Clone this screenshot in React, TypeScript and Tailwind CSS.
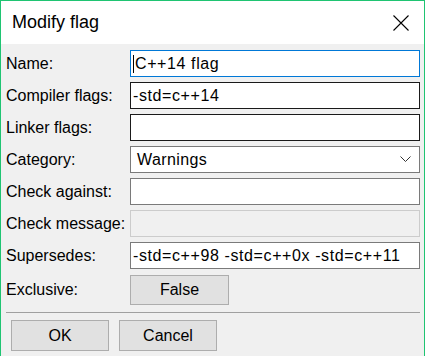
import React from "react";

const font = { fontFamily: '"Liberation Sans", Arial, sans-serif' };

function Field({
  label,
  children,
}: {
  label: string;
  children: React.ReactNode;
}) {
  return (
    <>
      <div className="flex items-center text-[16px] text-black">{label}</div>
      {children}
    </>
  );
}

function TextBox({
  value,
  border,
  focused,
}: {
  value?: string;
  border: string;
  focused?: boolean;
}) {
  return (
    <div
      className={`flex h-[27px] items-center border bg-white pl-[2px] text-[16px] tracking-[0.6px] text-black ${border}`}
    >
      {focused && <span className="mr-[1px] h-[18px] w-px bg-black" />}
      <span>{value}</span>
    </div>
  );
}

export default function App() {
  return (
    <div className="h-[356px] w-[426px] overflow-hidden bg-white" style={font}>
      <div className="flex h-[356px] w-[425px] flex-col border-x border-t border-[#1fc472] bg-[#f0f0f0]">
        {/* Title bar */}
        <div className="flex h-[43px] shrink-0 items-center justify-between bg-white pl-[11px] pr-[15px]">
          <span className="text-[18px] text-black">Modify flag</span>
          <svg width="16" height="16" viewBox="0 0 16 16" className="mt-[1px]">
            <path d="M0.5 0.5 L15.5 15.5 M15.5 0.5 L0.5 15.5" stroke="#000" strokeWidth="1.1" fill="none" />
          </svg>
        </div>

        {/* Fields */}
        <div className="grid grid-cols-[124px_1fr] gap-y-[5px] pl-[5px] pr-[4px] pt-[6px]">
          <Field label="Name:">
            <TextBox value="C++14 flag" border="border-[#0078d7]" focused />
          </Field>
          <Field label="Compiler flags:">
            <TextBox value="-std=c++14" border="border-[#1a1a1a]" />
          </Field>
          <Field label="Linker flags:">
            <TextBox border="border-[#1a1a1a]" />
          </Field>
          <Field label="Category:">
            <div className="flex h-[27px] items-center justify-between border border-[#7a7a7a] bg-white pl-[6px] pr-[8px] text-[16px] tracking-[0.4px] text-black">
              <span>Warnings</span>
              <svg width="11" height="7" viewBox="0 0 11 7">
                <path d="M0.5 0.5 L5.5 5.5 L10.5 0.5" stroke="#333" strokeWidth="1" fill="none" />
              </svg>
            </div>
          </Field>
          <Field label="Check against:">
            <TextBox border="border-[#7a7a7a]" />
          </Field>
          <Field label="Check message:">
            <div className="h-[27px] border border-[#cccccc] bg-[#f0f0f0]" />
          </Field>
          <Field label="Supersedes:">
            <TextBox value="-std=c++98 -std=c++0x -std=c++11" border="border-[#7a7a7a]" />
          </Field>
          <div className="mt-[1px] flex items-center text-[16px] text-black">Exclusive:</div>
          <div className="mt-[1px]">
            <button className="flex h-[30px] w-[99px] items-center justify-center border border-[#adadad] bg-[#e1e1e1] text-[16px] text-black">
              False
            </button>
          </div>
        </div>

        {/* Separator */}
        <div className="ml-[5px] mr-[4px] mt-[7px] h-px bg-[#a0a0a0]" />

        {/* Buttons */}
        <div className="flex gap-[10px] pl-[10px] pt-[7px]">
          <button className="flex h-[31px] w-[98px] items-center justify-center border border-[#adadad] bg-[#e1e1e1] text-[16px] text-black">
            OK
          </button>
          <button className="flex h-[31px] w-[98px] items-center justify-center border border-[#adadad] bg-[#e1e1e1] text-[16px] text-black">
            Cancel
          </button>
        </div>
      </div>
    </div>
  );
}
